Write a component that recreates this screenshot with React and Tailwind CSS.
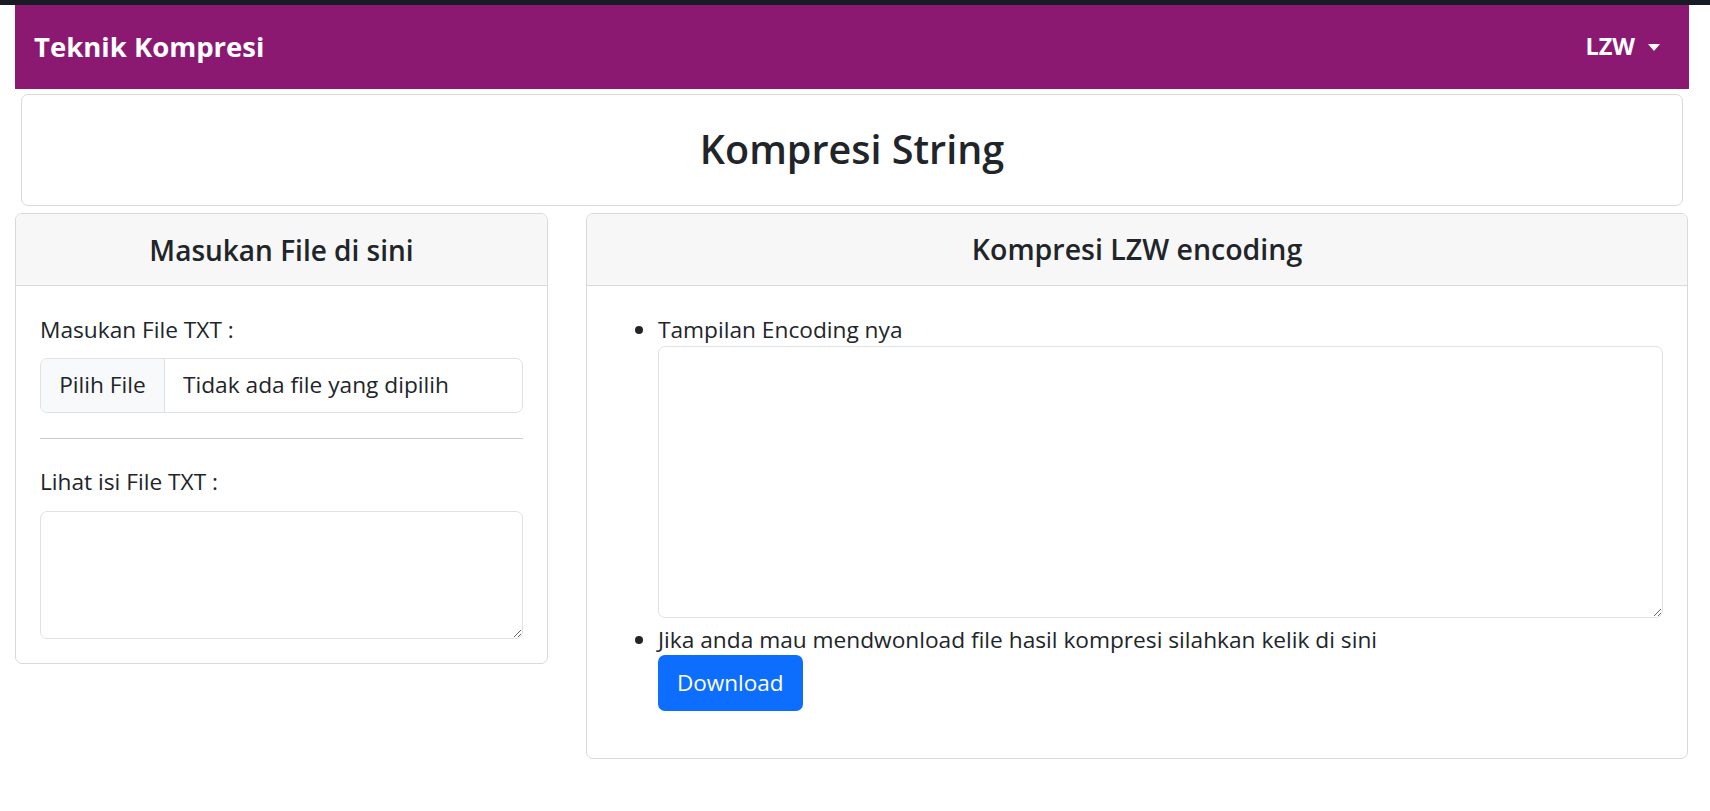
export default function App() {
  const font = { fontFamily: '"Open Sans", "Noto Sans", sans-serif' };
  return (
    <div className="min-h-screen bg-white text-[#212529]" style={font}>
      {/* top strip */}
      <div className="h-[5px] bg-[#161b26]" />

      {/* Navbar */}
      <div className="pl-[15px] pr-[21px]">
        <nav className="h-[84px] bg-[#8b1972] flex items-center justify-between pl-[19px] pr-[29px]">
          <span className="text-white font-bold text-[27.5px]">Teknik Kompresi</span>
          <span className="text-white font-bold text-[23.5px] flex items-center gap-[13px]">
            LZW
            <span className="inline-block w-0 h-0 border-l-[6px] border-r-[6px] border-t-[7px] border-l-transparent border-r-transparent border-t-white" />
          </span>
        </nav>
      </div>

      {/* Title card */}
      <div className="mt-[5px] ml-[21px] mr-[27px] h-[112px] border border-[#d9d9d9] rounded-[7px] flex items-center justify-center">
        <h2 className="text-[39.5px] font-semibold">Kompresi String</h2>
      </div>

      {/* Cards */}
      <div className="mt-[7px] ml-[15px] mr-[22px] flex gap-[38px] items-start">
        {/* Left card */}
        <div className="w-[533px] border border-[#d9d9d9] rounded-[7px] overflow-hidden">
          <div className="h-[72px] bg-[#f7f7f7] border-b border-[#d9d9d9] flex items-center justify-center">
            <h4 className="text-[28px] font-semibold">Masukan File di sini</h4>
          </div>
          <div className="px-[24px] pt-[29px] pb-[24px] text-[22.7px]">
            <p className="leading-[30px]">Masukan File TXT :</p>
            <div className="mt-[13px] h-[55px] flex border border-[#dee2e6] rounded-[7px] overflow-hidden">
              <div className="w-[124px] bg-[#f8f9fa] border-r border-[#dee2e6] flex items-center justify-center">
                Pilih File
              </div>
              <div className="flex items-center pl-[18px]">Tidak ada file yang dipilih</div>
            </div>
            <hr className="mt-[25px] border-t border-[#ccc]" />
            <p className="mt-[28px] leading-[30px]">Lihat isi File TXT :</p>
            <textarea className="mt-[14px] block w-full h-[128px] border border-[#dee2e6] rounded-[7px] outline-none" />
          </div>
        </div>

        {/* Right card */}
        <div className="flex-1 border border-[#d9d9d9] rounded-[7px] overflow-hidden">
          <div className="h-[72px] bg-[#f7f7f7] border-b border-[#d9d9d9] flex items-center justify-center">
            <h4 className="text-[28.5px] font-semibold">Kompresi LZW encoding</h4>
          </div>
          <div className="pl-[71px] pr-[24px] pt-[29px] pb-[47px] text-[22.7px]">
            <ul className="list-disc">
              <li className="leading-[30px]">
                Tampilan Encoding nya
                <textarea className="mt-[1px] block w-full h-[272px] border border-[#dee2e6] rounded-[7px] outline-none" />
              </li>
              <li className="leading-[30px] mt-[7px]">
                Jika anda mau mendwonload file hasil kompresi silahkan kelik di sini
                <div>
                  <button className="h-[56px] px-[19px] bg-[#0d6efd] text-white rounded-[7px] text-[22.5px]">
                    Download
                  </button>
                </div>
              </li>
            </ul>
          </div>
        </div>
      </div>
    </div>
  );
}
